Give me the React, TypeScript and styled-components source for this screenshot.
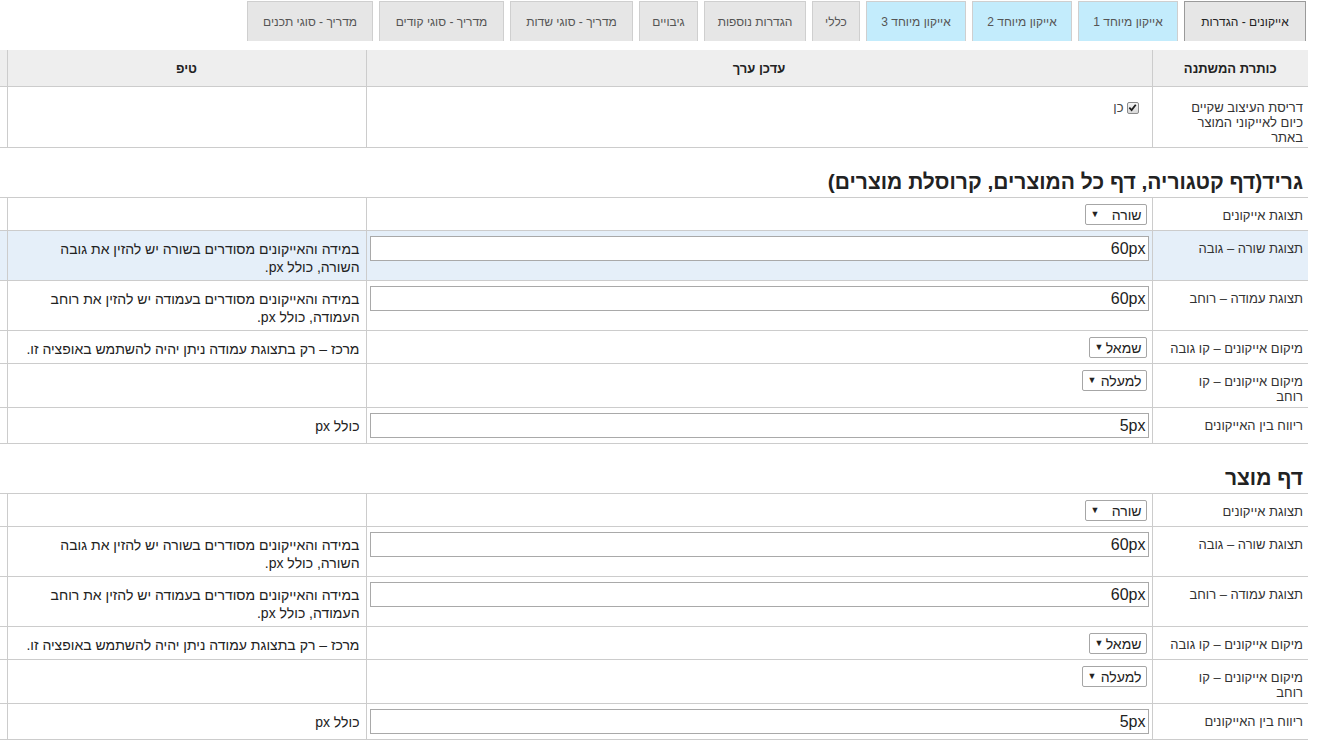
import React from 'react';
import styled, { createGlobalStyle } from 'styled-components';

const GlobalStyle = createGlobalStyle`
  html, body {
    margin: 0;
    padding: 0;
    overflow: hidden;
    background: #fff;
  }
  body {
    direction: rtl;
    font-family: 'Liberation Sans', 'DejaVu Sans', Arial, sans-serif;
    font-size: 13px;
    color: #333;
  }
`;

const Page = styled.div`
  width: 100%;
  overflow: hidden;
  padding-right: 19px;
  box-sizing: border-box;
`;

const TabBar = styled.div`
  display: flex;
  gap: 6px;
  padding: 1px 2px 0 0;
  margin-bottom: 9px;
`;

type TabKind = 'active' | 'special' | 'plain';

const Tab = styled.div<{ $kind: TabKind; $w: number }>`
  flex: none;
  width: ${(p) => p.$w}px;
  height: 40px;
  box-sizing: border-box;
  display: flex;
  align-items: center;
  justify-content: center;
  font-size: 12px;
  white-space: nowrap;
  border: 1px solid ${(p) => (p.$kind === 'active' ? '#9a9a9a' : '#cfcfcf')};
  border-bottom: none;
  background: ${(p) => (p.$kind === 'special' ? '#c3ecfc' : '#e6e6e6')};
  color: ${(p) => (p.$kind === 'active' ? '#222' : '#555')};
  cursor: pointer;
`;

const TableWrap = styled.div`
  display: flex;
  justify-content: flex-start;
`;

const Table = styled.table`
  border-collapse: collapse;
  table-layout: fixed;
  width: 1361px;
  flex: none;
`;

const HeadCell = styled.th`
  height: 36px;
  padding: 0;
  background: #eeeeee;
  font-size: 13px;
  font-weight: bold;
  color: #222;
  text-align: center;
  border-bottom: 1px solid #cccccc;
  border-left: 1px solid #cccccc;
`;

const Row = styled.tr<{ $highlight?: boolean }>`
  background: ${(p) => (p.$highlight ? '#e5eff9' : 'transparent')};
`;

const LabelCell = styled.td<{ $top?: number; $bottom?: number }>`
  vertical-align: top;
  padding: ${(p) => p.$top ?? 10}px 5px ${(p) => p.$bottom ?? 3}px 8px;
  line-height: 15px;
  font-size: 13px;
  color: #333;
  text-align: right;
  white-space: nowrap;
  border-bottom: 1px solid #cccccc;
  border-left: 1px solid #cccccc;
`;

const ValueCell = styled.td<{ $top?: number }>`
  vertical-align: top;
  padding: ${(p) => p.$top ?? 5}px 3px 5px 3px;
  border-bottom: 1px solid #cccccc;
  border-left: 1px solid #cccccc;
`;

const TipCell = styled.td`
  vertical-align: top;
  padding: 9px 6px 4px 6px;
  line-height: 18px;
  font-size: 14px;
  color: #222;
  text-align: right;
  white-space: nowrap;
  border-bottom: 1px solid #cccccc;
  border-left: 1px solid #cccccc;
`;

const EmptyCell = styled.td`
  border-bottom: 1px solid #cccccc;
  border-left: 1px solid #cccccc;
`;

const TitleCell = styled.td`
  padding: 22px 5px 4px 5px;
  font-size: 21px;
  line-height: 23px;
  font-weight: bold;
  color: #222;
  text-align: right;
  border-bottom: 1px solid #cccccc;
`;

const TextInput = styled.input`
  display: block;
  width: 100%;
  height: 25px;
  box-sizing: border-box;
  margin: 0;
  padding: 0 2px;
  border: 1px solid #a9a9a9;
  background: #fff;
  font-family: 'Liberation Sans', 'DejaVu Sans', Arial, sans-serif;
  font-size: 16px;
  color: #222;
  text-align: right;
  direction: rtl;
  outline: none;
`;

const SelectBox = styled.div<{ $w: number }>`
  width: ${(p) => p.$w}px;
  height: 21px;
  box-sizing: border-box;
  margin-right: 2px;
  padding: 0 4px 0 5px;
  display: flex;
  align-items: center;
  justify-content: space-between;
  border: 1px solid #a6a6a6;
  border-radius: 2px;
  background: #fff;
  font-size: 14px;
  color: #222;
`;

const Arrow = styled.span`
  font-size: 9px;
  color: #222;
  line-height: 1;
`;

const CheckWrap = styled.label`
  display: flex;
  align-items: center;
  gap: 3px;
  padding-right: 10px;
  font-size: 13px;
  color: #444;
`;

const CheckBox = styled.span`
  width: 12px;
  height: 12px;
  box-sizing: border-box;
  border: 1px solid #8a8a8a;
  border-radius: 2px;
  background: linear-gradient(#f4f4f4, #d8d8d8);
  display: flex;
  align-items: center;
  justify-content: center;
`;

type Field =
  | { kind: 'select'; label: string[]; value: string; w: number; tip?: string[] }
  | { kind: 'input'; label: string[]; value: string; tip?: string[]; highlight?: boolean };

const sectionFields = (highlightFirst: boolean): Field[] => [
  { kind: 'select', label: ['תצוגת אייקונים'], value: 'שורה', w: 62 },
  {
    kind: 'input',
    label: ['תצוגת שורה – גובה'],
    value: '60px',
    tip: ['במידה והאייקונים מסודרים בשורה יש להזין את גובה', 'השורה, כולל px.'],
    highlight: highlightFirst,
  },
  {
    kind: 'input',
    label: ['תצוגת עמודה – רוחב'],
    value: '60px',
    tip: ['במידה והאייקונים מסודרים בעמודה יש להזין את רוחב', 'העמודה, כולל px.'],
  },
  {
    kind: 'select',
    label: ['מיקום אייקונים – קו גובה'],
    value: 'שמאל',
    w: 58,
    tip: ['מרכז – רק בתצוגת עמודה ניתן יהיה להשתמש באופציה זו.'],
  },
  { kind: 'select', label: ['מיקום אייקונים – קו', 'רוחב'], value: 'למעלה', w: 65 },
  { kind: 'input', label: ['ריווח בין האייקונים'], value: '5px', tip: ['כולל px'] },
];

const tabs: { title: string; kind: TabKind; w: number }[] = [
  { title: 'אייקונים - הגדרות', kind: 'active', w: 122 },
  { title: 'אייקון מיוחד 1', kind: 'special', w: 100 },
  { title: 'אייקון מיוחד 2', kind: 'special', w: 100 },
  { title: 'אייקון מיוחד 3', kind: 'special', w: 100 },
  { title: 'כללי', kind: 'plain', w: 48 },
  { title: 'הגדרות נוספות', kind: 'plain', w: 102 },
  { title: 'גיבויים', kind: 'plain', w: 59 },
  { title: 'מדריך - סוגי שדות', kind: 'plain', w: 123 },
  { title: 'מדריך - סוגי קודים', kind: 'plain', w: 125 },
  { title: 'מדריך - סוגי תכנים', kind: 'plain', w: 126 },
];

const Lines: React.FC<{ lines?: string[] }> = ({ lines = [] }) => (
  <>
    {lines.map((l, i) => (
      <React.Fragment key={i}>
        {i > 0 && <br />}
        {l}
      </React.Fragment>
    ))}
  </>
);

const FieldRow: React.FC<{ field: Field }> = ({ field }) => (
  <Row $highlight={field.kind === 'input' && field.highlight}>
    <LabelCell>
      <Lines lines={field.label} />
    </LabelCell>
    <ValueCell $top={field.kind === 'select' ? 6 : 5}>
      {field.kind === 'select' ? (
        <SelectBox $w={field.w}>
          <span>{field.value}</span>
          <Arrow>▼</Arrow>
        </SelectBox>
      ) : (
        <TextInput readOnly defaultValue={field.value} />
      )}
    </ValueCell>
    <TipCell>
      <Lines lines={field.tip} />
    </TipCell>
    <EmptyCell />
  </Row>
);

const Section: React.FC<{ title: string; highlightFirst?: boolean }> = ({ title, highlightFirst = false }) => (
  <>
    <tr>
      <TitleCell colSpan={4}>{title}</TitleCell>
    </tr>
    {sectionFields(highlightFirst).map((f, i) => (
      <FieldRow key={i} field={f} />
    ))}
  </>
);

export default function App() {
  return (
    <Page>
      <GlobalStyle />
      <TabBar>
        {tabs.map((t) => (
          <Tab key={t.title} $kind={t.kind} $w={t.w}>
            {t.title}
          </Tab>
        ))}
      </TabBar>
      <TableWrap>
        <Table>
          <colgroup>
            <col style={{ width: 156 }} />
            <col style={{ width: 786 }} />
            <col style={{ width: 359 }} />
            <col style={{ width: 60 }} />
          </colgroup>
          <tbody>
            <tr>
              <HeadCell>כותרת המשתנה</HeadCell>
              <HeadCell>עדכן ערך</HeadCell>
              <HeadCell>טיפ</HeadCell>
              <HeadCell />
            </tr>
            <Row>
              <LabelCell $top={13} $bottom={2}>
                <Lines lines={['דריסת העיצוב שקיים', 'כיום לאייקוני המוצר', 'באתר']} />
              </LabelCell>
              <ValueCell $top={13}>
                <CheckWrap>
                  <CheckBox>
                    <svg width="9" height="9" viewBox="0 0 10 10">
                      <path d="M1.5 5.2 L4 7.8 L8.6 2" fill="none" stroke="#1e1e1e" strokeWidth="2" />
                    </svg>
                  </CheckBox>
                  כן
                </CheckWrap>
              </ValueCell>
              <TipCell />
              <EmptyCell />
            </Row>
            <Section title="גריד(דף קטגוריה, דף כל המוצרים, קרוסלת מוצרים)" highlightFirst />
            <Section title="דף מוצר" />
          </tbody>
        </Table>
      </TableWrap>
    </Page>
  );
}
